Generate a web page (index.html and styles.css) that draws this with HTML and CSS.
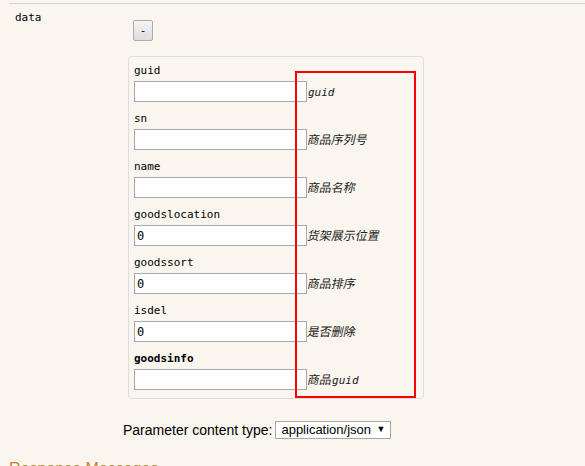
FILE: index.html
```html
<!DOCTYPE html>
<html lang="zh">
<head>
<meta charset="utf-8">
<title>data</title>
<link rel="stylesheet" href="styles.css">
</head>
<body>
<div class="wrap">
  <div class="param-row">
    <div class="pname">data</div>
    <div class="pval">
      <button class="toggle" type="button">-</button>
      <div class="model">
        <div class="field">
          <div class="flabel">guid</div>
          <div class="frow"><input class="inp" type="text" value=""><span class="desc">guid</span></div>
        </div>
        <div class="field">
          <div class="flabel">sn</div>
          <div class="frow"><input class="inp" type="text" value=""><span class="desc"><span class="cn">商品序列号</span></span></div>
        </div>
        <div class="field">
          <div class="flabel">name</div>
          <div class="frow"><input class="inp" type="text" value=""><span class="desc"><span class="cn">商品名称</span></span></div>
        </div>
        <div class="field">
          <div class="flabel">goodslocation</div>
          <div class="frow"><input class="inp" type="text" value="0"><span class="desc"><span class="cn">货架展示位置</span></span></div>
        </div>
        <div class="field">
          <div class="flabel">goodssort</div>
          <div class="frow"><input class="inp" type="text" value="0"><span class="desc"><span class="cn">商品排序</span></span></div>
        </div>
        <div class="field">
          <div class="flabel">isdel</div>
          <div class="frow"><input class="inp" type="text" value="0"><span class="desc"><span class="cn">是否删除</span></span></div>
        </div>
        <div class="field">
          <div class="flabel strong">goodsinfo</div>
          <div class="frow"><input class="inp" type="text" value=""><span class="desc"><span class="cn">商品</span>guid</span></div>
        </div>
      </div>
    </div>
  </div>
  <div class="ctype">
    <span class="ctype-label">Parameter content type:</span>
    <span class="select-wrap">
      <select class="sel"><option>application/json</option></select>
    </span>
  </div>
  <h4 class="resp">Response Messages</h4>
</div>
<div class="highlight"></div>
</body>
</html>
```

FILE: styles.css
```css
html, body {
  margin: 0;
  padding: 0;
  background: #faf5ee;
  height: 100%;
  overflow: hidden;
}
body {
  position: relative;
  font-family: "Liberation Sans", Arial, sans-serif;
  color: #000;
}
.wrap {
  margin: 3px 0 0 9px;
}
.param-row {
  display: flex;
  border-top: 1px solid #d2d2d2;
}
.pname {
  width: 113px;
  padding: 6px 0 0 6px;
  font-family: "DejaVu Sans Mono", monospace;
  font-size: 11px;
  line-height: 16px;
}
.pval {
  display: flex;
  flex-direction: column;
  align-items: flex-start;
}
.toggle {
  margin: 16px 0 0 5px;
  width: 20px;
  height: 21px;
  padding: 0;
  border: 1px solid #adadad;
  border-radius: 2px;
  background: linear-gradient(#f5f5f5, #dcdcdc);
  font-family: "DejaVu Sans Mono", monospace;
  font-size: 11px;
  line-height: 19px;
  color: #000;
}
.model {
  margin-top: 15px;
  width: 296px;
  box-sizing: border-box;
  border: 1px solid #dddddd;
  border-radius: 4px;
  padding: 3px 5px 2px 5px;
}
.field {
  margin-bottom: 6px;
}
.flabel {
  font-family: "DejaVu Sans Mono", monospace;
  font-size: 11px;
  line-height: 16px;
  padding-top: 3px;
  margin-bottom: 2px;
  color: #000;
}
.flabel.strong {
  font-weight: bold;
}
.frow {
  display: flex;
  align-items: baseline;
}
.inp {
  width: 173px;
  height: 21px;
  box-sizing: border-box;
  margin: 0;
  border: 1px solid #a9a9a9;
  padding: 1px 2px;
  background: #fff;
  font-family: "DejaVu Sans Mono", monospace;
  font-size: 12px;
  color: #000;
  outline: none;
}
.desc {
  margin-left: 1px;
  font-family: "DejaVu Sans Mono", monospace;
  font-size: 11px;
  font-style: italic;
  color: #222;
  white-space: nowrap;
}
.cn {
  display: inline-block;
  font-family: "Noto Sans CJK SC", sans-serif;
  font-size: 12px;
  font-style: normal;
  transform: skewX(-12deg);
}
.ctype {
  display: flex;
  align-items: center;
  gap: 3px;
  margin: 22px 0 0 114px;
  height: 18px;
  font-size: 14px;
  color: #000;
}
.select-wrap {
  position: relative;
  display: inline-block;
  height: 18px;
}
.sel {
  -webkit-appearance: none;
  appearance: none;
  width: 116px;
  height: 18px;
  box-sizing: border-box;
  margin: 0;
  border: 1px solid #a6a6a6;
  border-radius: 0;
  background: #fff;
  padding: 0 0 0 5px;
  font-family: "Liberation Sans", Arial, sans-serif;
  font-size: 13px;
  line-height: 16px;
  color: #000;
}
.select-wrap::after {
  content: "\25BC";
  position: absolute;
  right: 6px;
  top: 3px;
  font-size: 9px;
  line-height: 10px;
  color: #000;
  pointer-events: none;
}
.resp {
  margin: 20px 0 0 0;
  font-size: 16px;
  font-weight: normal;
  line-height: 20px;
  color: #c5862b;
}
.highlight {
  position: absolute;
  left: 295px;
  top: 71px;
  width: 121px;
  height: 327px;
  box-sizing: border-box;
  border: 2px solid #ff0000;
}
```
